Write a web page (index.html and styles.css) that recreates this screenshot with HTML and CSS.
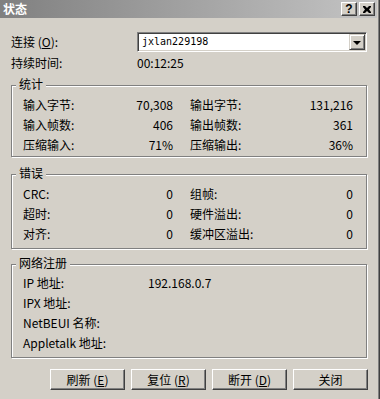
FILE: index.html
```html
<!DOCTYPE html>
<html>
<head>
<meta charset="utf-8">
<link rel="stylesheet" href="styles.css">
</head>
<body>
<div class="window">
  <div class="titlebar">
    <span class="title">状态</span>
    <div class="caption-btns">
      <span class="cbtn help">?</span>
      <span class="cbtn"><svg width="8" height="7" viewBox="0 0 8 7"><path d="M0 0h2l2 2 2-2h2v1l-2 2.5 2 2.5v1h-2l-2-2-2 2h-2v-1l2-2.5-2-2.5z" fill="#000"/></svg></span>
    </div>
  </div>
  <div class="content">
    <div class="conn-row">
      <span class="conn-label">连接 (<u>O</u>):</span>
      <div class="combo">
        <span class="combo-text">jxlan229198</span>
        <span class="combo-btn"><span class="arrow"></span></span>
      </div>
    </div>
    <div class="dur-row">
      <span>持续时间:</span>
      <span>00:12:25</span>
    </div>

    <div class="group g-stats">
      <span class="legend">统计</span>
      <div class="grid4">
        <span>输入字节:</span><span class="val">70,308</span><span class="lab2">输出字节:</span><span class="val">131,216</span>
        <span>输入帧数:</span><span class="val">406</span><span class="lab2">输出帧数:</span><span class="val">361</span>
        <span>压缩输入:</span><span class="val">71%</span><span class="lab2">压缩输出:</span><span class="val">36%</span>
      </div>
    </div>

    <div class="group g-errors">
      <span class="legend">错误</span>
      <div class="grid4">
        <span>CRC:</span><span class="val">0</span><span class="lab2">组帧:</span><span class="val">0</span>
        <span>超时:</span><span class="val">0</span><span class="lab2">硬件溢出:</span><span class="val">0</span>
        <span>对齐:</span><span class="val">0</span><span class="lab2">缓冲区溢出:</span><span class="val">0</span>
      </div>
    </div>

    <div class="group g-net">
      <span class="legend">网络注册</span>
      <div class="grid2">
        <span>IP 地址:</span><span>192.168.0.7</span>
        <span>IPX 地址:</span><span></span>
        <span>NetBEUI 名称:</span><span></span>
        <span>Appletalk 地址:</span><span></span>
      </div>
    </div>

    <div class="buttons">
      <span class="btn">刷新 (<u>E</u>)</span>
      <span class="btn">复位 (<u>R</u>)</span>
      <span class="btn">断开 (<u>D</u>)</span>
      <span class="btn">关闭</span>
    </div>
  </div>
</div>
</body>
</html>
```
FILE: styles.css
```css
* { box-sizing: border-box; }
body {
  margin: 0;
  font-family: "Noto Sans CJK SC", "Noto Sans", sans-serif;
  font-size: 12px;
  color: #000;
  background: #d4d0c8;
}
.window {
  width: 380px;
  height: 399px;
  background: #d4d0c8;
  padding-right: 3px;
  box-shadow: inset -1px 0 #404040, inset -2px 0 #808080;
  overflow: hidden;
}
.titlebar {
  height: 18px;
  background: linear-gradient(to right, #808080, #c4c4c4);
  display: flex;
  align-items: center;
  justify-content: space-between;
  padding: 0 2px 0 3px;
}
.title {
  color: #fff;
  font-weight: bold;
  line-height: 18px;
}
.caption-btns {
  display: flex;
  gap: 2px;
}
.cbtn {
  width: 16px;
  height: 14px;
  background: #d4d0c8;
  border: 1px solid;
  border-color: #fff #404040 #404040 #fff;
  box-shadow: inset -1px -1px #808080;
  display: flex;
  align-items: center;
  justify-content: center;
}
.cbtn.help {
  font-family: "Liberation Sans", sans-serif;
  font-weight: bold;
  font-size: 12px;
  line-height: 12px;
}
.content {
  padding: 14px 0 0 11px;
}
.conn-row {
  display: flex;
  align-items: center;
  height: 20px;
}
.conn-label {
  width: 126px;
  line-height: 16px;
}
.combo {
  width: 230px;
  height: 20px;
  background: #fff;
  border: 1px solid;
  border-color: #808080 #fff #fff #808080;
  box-shadow: inset 1px 1px #404040, inset -1px -1px #d4d0c8;
  display: flex;
  align-items: center;
  justify-content: space-between;
  padding: 1px 1px 1px 4px;
}
.combo-text {
  font-family: "DejaVu Sans Mono", monospace;
  font-size: 10px;
  line-height: 16px;
}
.combo-btn {
  width: 16px;
  height: 16px;
  background: #d4d0c8;
  border: 1px solid;
  border-color: #d4d0c8 #404040 #404040 #d4d0c8;
  box-shadow: inset 1px 1px #fff, inset -1px -1px #808080;
  display: flex;
  align-items: center;
  justify-content: center;
}
.arrow {
  width: 0;
  height: 0;
  border-left: 4px solid transparent;
  border-right: 4px solid transparent;
  border-top: 4px solid #000;
  margin-top: 1px;
}
.dur-row {
  margin-top: 3px;
  display: grid;
  grid-template-columns: 126px auto;
  line-height: 16px;
}
.group {
  position: relative;
  width: 356px;
  border: 1px solid #808080;
  box-shadow: inset 1px 1px #fff, 1px 1px #fff;
}
.legend {
  position: absolute;
  top: -9px;
  left: 4px;
  padding: 0 3px;
  line-height: 14px;
  background: #d4d0c8;
}
.g-stats {
  margin-top: 14px;
  padding: 9px 0 1px 11px;
}
.g-errors {
  margin-top: 17px;
  padding: 9px 0 4px 11px;
}
.g-net {
  margin-top: 15px;
  padding: 8px 0 4px 11px;
}
.grid4 {
  display: grid;
  grid-template-columns: 90px 60px 120px 60px;
  grid-auto-rows: 20px;
  align-items: center;
  line-height: 16px;
}
.val { text-align: right; }
.lab2 { padding-left: 17px; }
.grid2 {
  display: grid;
  grid-template-columns: 125px auto;
  grid-auto-rows: 20px;
  align-items: center;
  line-height: 16px;
}
.buttons {
  margin-top: 11px;
  padding-left: 39px;
  display: flex;
  gap: 6px;
}
.btn {
  width: 75px;
  height: 21px;
  border: 1px solid;
  border-color: #fff #404040 #404040 #fff;
  box-shadow: inset -1px -1px #808080;
  display: flex;
  align-items: center;
  justify-content: center;
  line-height: 16px;
}
u { text-underline-offset: 1px; }
```
